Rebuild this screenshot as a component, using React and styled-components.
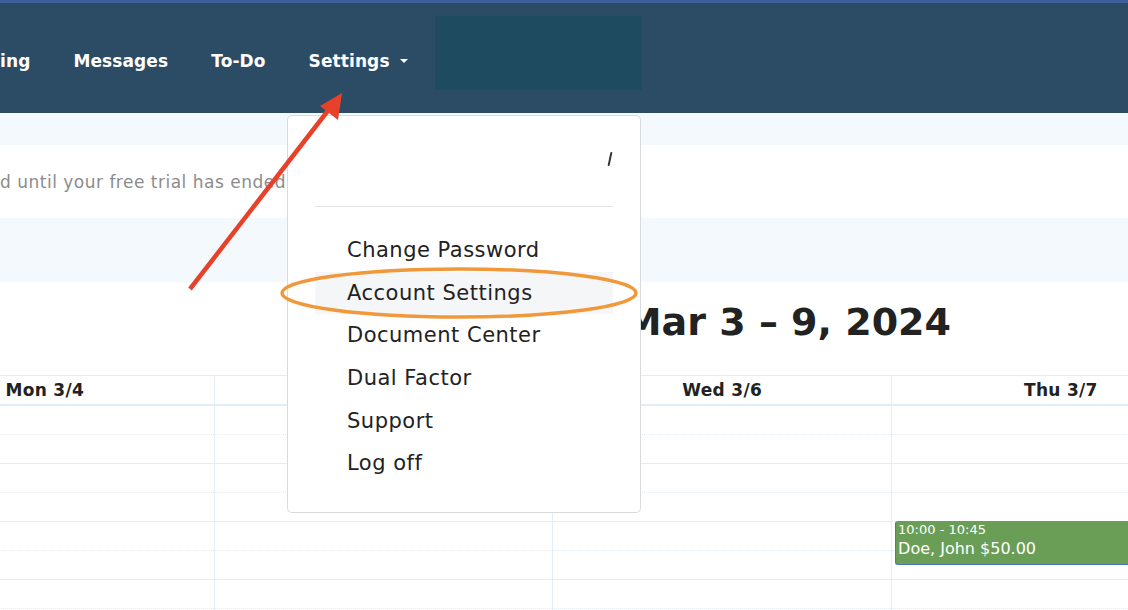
import React from "react";
import styled, { createGlobalStyle } from "styled-components";

const Global = createGlobalStyle`
  html, body { margin: 0; padding: 0; background: #fff; }
  body { font-family: "DejaVu Sans", "Noto Sans", sans-serif; color: #222; }
  * { box-sizing: border-box; }
`;

const Page = styled.div`
  position: relative;
  width: 1128px;
  height: 610px;
  overflow: hidden;
  background: #fff;
`;

const TopStrip = styled.div`
  height: 3px;
  background: #3d5f9e;
`;

const NavBar = styled.nav`
  height: 110px;
  background: #2c4c66;
  display: flex;
  align-items: center;
`;

const NavList = styled.div`
  display: flex;
  align-items: center;
  gap: 43px;
  padding-top: 6px;
`;

const NavItem = styled.span`
  color: #fff;
  font-size: 17px;
  font-weight: 700;
  letter-spacing: 0.1px;
  display: inline-flex;
  align-items: center;
  gap: 10px;
  white-space: nowrap;
`;

const Caret = styled.span`
  width: 0;
  height: 0;
  border-left: 4.5px solid transparent;
  border-right: 4.5px solid transparent;
  border-top: 4.5px solid #fff;
`;

const BrandBox = styled.div`
  align-self: flex-start;
  margin-top: 13px;
  margin-left: 27px;
  width: 207px;
  height: 74px;
  background: #1f4b61;
`;

const Band = styled.div`
  height: ${(p) => p.$h}px;
  background: #f4f9fd;
`;

const Notice = styled.div`
  height: 73px;
  display: flex;
  align-items: center;
  font-size: 17px;
  letter-spacing: 0.5px;
  color: #8c8c8c;
  white-space: nowrap;
  padding-top: 1px;
`;

const TitleRow = styled.div`
  height: 93px;
  display: flex;
  justify-content: flex-end;
  padding-right: 177px;
  padding-top: 14px;
`;

const Title = styled.h1`
  margin: 0;
  font-size: 38px;
  font-weight: 700;
  color: #222;
  white-space: nowrap;
  line-height: 52px;
`;

const Calendar = styled.div`
  margin-left: -124px;
  width: ${338.7 * 4}px;
  border-top: 1px solid #e3edf5;
`;

const HeaderRow = styled.div`
  display: grid;
  grid-template-columns: repeat(4, 338.7px);
  height: 30px;
  border-bottom: 2px solid #e3edf5;
`;

const HeaderCell = styled.div`
  border-right: 1px solid #e5eef6;
  display: flex;
  align-items: center;
  justify-content: center;
  font-size: 17px;
  letter-spacing: 0.3px;
  font-weight: 700;
  color: #222;
`;

const Body = styled.div`
  display: grid;
  grid-template-columns: repeat(4, 338.7px);
`;

const Column = styled.div`
  position: relative;
  border-right: 1px solid #e5eef6;
`;

const Slot = styled.div`
  height: 29px;
  border-bottom: 1px ${(p) => (p.$solid ? "solid" : "dotted")} #e3edf5;
`;

const Event = styled.div`
  position: absolute;
  top: ${(p) => p.$top}px;
  left: 3px;
  right: 3px;
  height: 44px;
  background: #6a9e57;
  border: 1px solid #4b78ae;
  border-top-color: #6a9e57;
  border-right-color: #6a9e57;
  border-radius: 3px;
  color: #fff;
  padding: 1px 2px;
  line-height: 1.15;
`;

const EventTime = styled.div`
  font-size: 13px;
`;

const EventName = styled.div`
  font-size: 16px;
  margin-top: 2px;
`;

const Dropdown = styled.div`
  position: absolute;
  left: 287px;
  top: 115px;
  width: 354px;
  height: 398px;
  background: #fff;
  border: 1px solid #d7dbde;
  border-radius: 5px;
  padding: 0 27px;
`;

const DropTop = styled.div`
  height: 91px;
  display: flex;
  justify-content: flex-end;
  padding: 36px 2px 0 0;
  border-bottom: 1px solid #e2e5e8;
`;

const Tick = styled.span`
  width: 2px;
  height: 14px;
  background: #333;
  transform: skewX(-12deg);
  border-radius: 1px;
`;

const MenuList = styled.div`
  padding-top: 22px;
`;

const MenuItem = styled.div`
  height: 42.6px;
  display: flex;
  align-items: center;
  padding-left: 32px;
  font-size: 21px;
  letter-spacing: 0.5px;
  color: #222;
  background: ${(p) => (p.$active ? "#f5f6f8" : "transparent")};
  white-space: nowrap;
`;

const Overlay = styled.svg`
  position: absolute;
  left: 0;
  top: 0;
  pointer-events: none;
`;

const days = ["Mon 3/4", "Tue 3/5", "Wed 3/6", "Thu 3/7"];
const items = [
  "Change Password",
  "Account Settings",
  "Document Center",
  "Dual Factor",
  "Support",
  "Log off",
];

export default function App() {
  return (
    <Page>
      <Global />
      <TopStrip />
      <NavBar>
        <NavList>
          <NavItem>ing</NavItem>
          <NavItem>Messages</NavItem>
          <NavItem>To-Do</NavItem>
          <NavItem>
            Settings
            <Caret />
          </NavItem>
        </NavList>
        <BrandBox />
      </NavBar>
      <Band $h={32} />
      <Notice>d until your free trial has ended.</Notice>
      <Band $h={64} />
      <TitleRow>
        <Title>Mar 3 – 9, 2024</Title>
      </TitleRow>
      <Calendar>
        <HeaderRow>
          {days.map((d) => (
            <HeaderCell key={d}>{d}</HeaderCell>
          ))}
        </HeaderRow>
        <Body>
          {days.map((d, ci) => (
            <Column key={d}>
              {Array.from({ length: 8 }).map((_, i) => (
                <Slot key={i} $solid={i % 2 === 1} />
              ))}
              {ci === 3 && (
                <Event $top={115}>
                  <EventTime>10:00 - 10:45</EventTime>
                  <EventName>Doe, John $50.00</EventName>
                </Event>
              )}
            </Column>
          ))}
        </Body>
      </Calendar>
      <Dropdown>
        <DropTop>
          <Tick />
        </DropTop>
        <MenuList>
          {items.map((t) => (
            <MenuItem key={t} $active={t === "Account Settings"}>
              {t}
            </MenuItem>
          ))}
        </MenuList>
      </Dropdown>
      <Overlay width="1128" height="610" viewBox="0 0 1128 610">
        <ellipse cx="459" cy="293" rx="177" ry="24" fill="none" stroke="#f0983a" strokeWidth="3.5" />
        <line x1="190" y1="289" x2="330" y2="108" stroke="#e8412a" strokeWidth="4.5" />
        <polygon points="342,93 320,106 338,120" fill="#e8412a" />
      </Overlay>
    </Page>
  );
}
